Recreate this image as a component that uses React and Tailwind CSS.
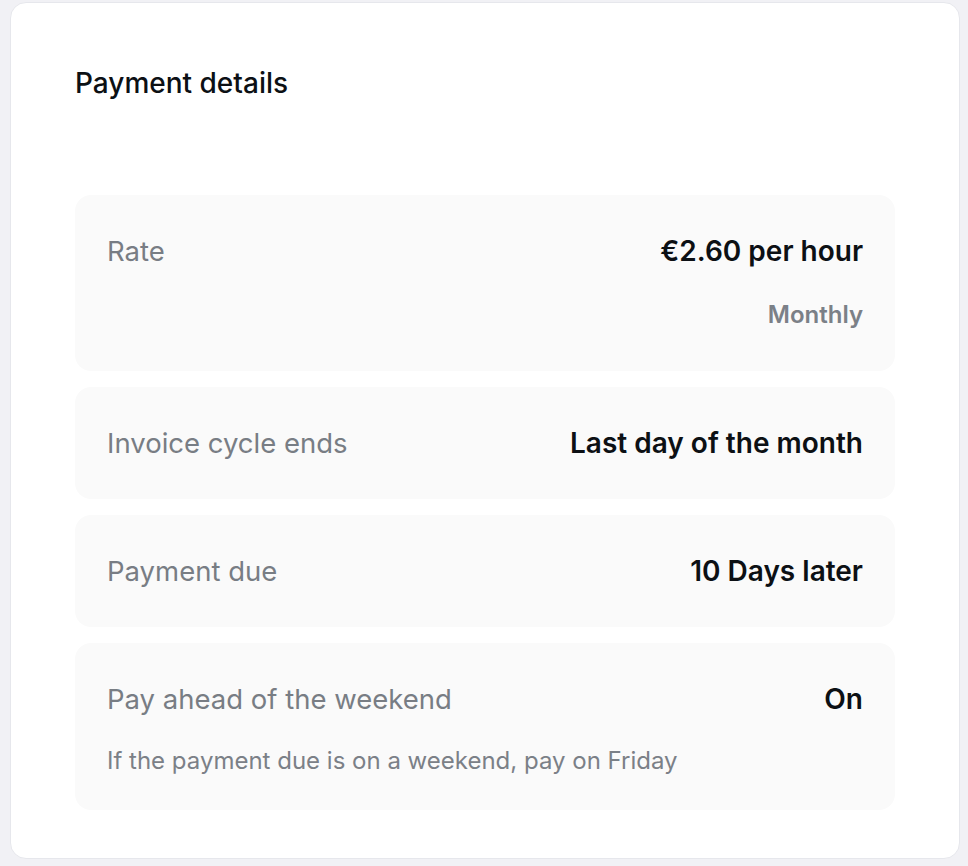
import React from 'react';

const rows = [
  { label: 'Rate', value: '€2.60 per hour', note: 'Monthly' },
  { label: 'Invoice cycle ends', value: 'Last day of the month' },
  { label: 'Payment due', value: '10 Days later' },
  {
    label: 'Pay ahead of the weekend',
    value: 'On',
    hint: 'If the payment due is on a weekend, pay on Friday',
  },
];

function DetailRow({ label, value, note, hint }) {
  return (
    <div className={`rounded-2xl bg-[#fafafa] px-8 pt-10 ${hint ? 'pb-[33px]' : 'pb-10'}`}>
      <div className="flex items-start justify-between gap-6">
        <span className="text-[27.5px] leading-8 text-[#787d84]">{label}</span>
        <span className="text-[28px] leading-8 font-semibold text-[#0c1014]">{value}</span>
      </div>
      {note && (
        <div className="mt-8 text-right text-[24px] leading-8 font-semibold text-[#7b8087]">{note}</div>
      )}
      {hint && (
        <p className="mt-[30px] text-[24px] leading-8 text-[#7b8087]">{hint}</p>
      )}
    </div>
  );
}

export default function App() {
  return (
    <div
      className="min-h-[866px] bg-[#f1f1f5] pt-[2px] pl-[10px] pr-[8px] pb-[8px]"
      style={{ fontFamily: 'Inter, "Noto Sans", sans-serif' }}
    >
      <div className="rounded-2xl border border-[#e6e7ec] bg-white px-16 pt-16 pb-12">
        <h2 className="text-[28px] leading-8 font-medium text-[#0c1014]">Payment details</h2>

        <div className="mt-24 flex flex-col gap-4">
          {rows.map((r) => (
            <DetailRow key={r.label} {...r} />
          ))}
        </div>
      </div>
    </div>
  );
}
